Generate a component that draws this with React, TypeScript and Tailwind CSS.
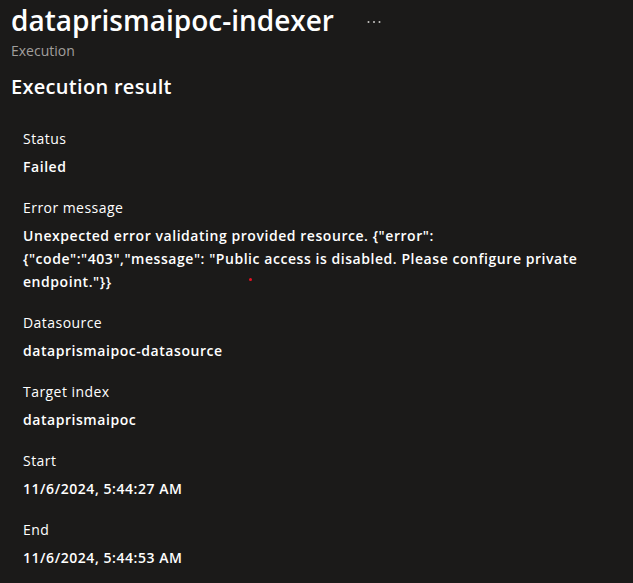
const fields = [
  { label: 'Status', value: 'Failed' },
  {
    label: 'Error message',
    value:
      'Unexpected error validating provided resource. {"error": {"code":"403","message": "Public access is disabled. Please configure private endpoint."}}',
  },
  { label: 'Datasource', value: 'dataprismaipoc-datasource' },
  { label: 'Target index', value: 'dataprismaipoc' },
  { label: 'Start', value: '11/6/2024, 5:44:27 AM' },
  { label: 'End', value: '11/6/2024, 5:44:53 AM' },
];

export default function App() {
  return (
    <div
      className="relative min-h-[583px] w-full bg-[#1b1a19] text-white"
      style={{ fontFamily: '"Segoe UI", "Open Sans", sans-serif' }}
    >
      {/* Header */}
      <div className="px-[11px] pt-[1px]">
        <div className="flex items-center">
          <h1 className="text-[28px] font-semibold leading-[38px]">dataprismaipoc-indexer</h1>
          <button className="ml-[24px] mt-[3px] flex h-8 w-8 items-center justify-center text-[#c8c6c4]">
            <svg width="14" height="4" viewBox="0 0 14 4" fill="currentColor">
              <circle cx="1.5" cy="2" r="1" />
              <circle cx="7" cy="2" r="1" />
              <circle cx="12.5" cy="2" r="1" />
            </svg>
          </button>
        </div>
        <p className="mt-[3px] text-[14px] leading-[18px] text-[#a19f9d]">Execution</p>
        <h2 className="mt-[13px] text-[20px] font-semibold leading-[28px] tracking-[0.3px]">
          Execution result
        </h2>
      </div>

      {/* Details */}
      <div className="mt-[28px] flex flex-col gap-[20px] pl-[23px] pr-[35px]">
        {fields.map((f) => (
          <div key={f.label} className="flex flex-col gap-[6px]">
            <p className="text-[14px] leading-[20px] tracking-[0.45px]">{f.label}</p>
            <p className="text-[14px] font-semibold leading-[23px] tracking-[0.55px]">{f.value}</p>
          </div>
        ))}
      </div>

      <span className="absolute left-[249px] top-[278px] h-[3px] w-[3px] rounded-full bg-[#e81123]" />
    </div>
  );
}
